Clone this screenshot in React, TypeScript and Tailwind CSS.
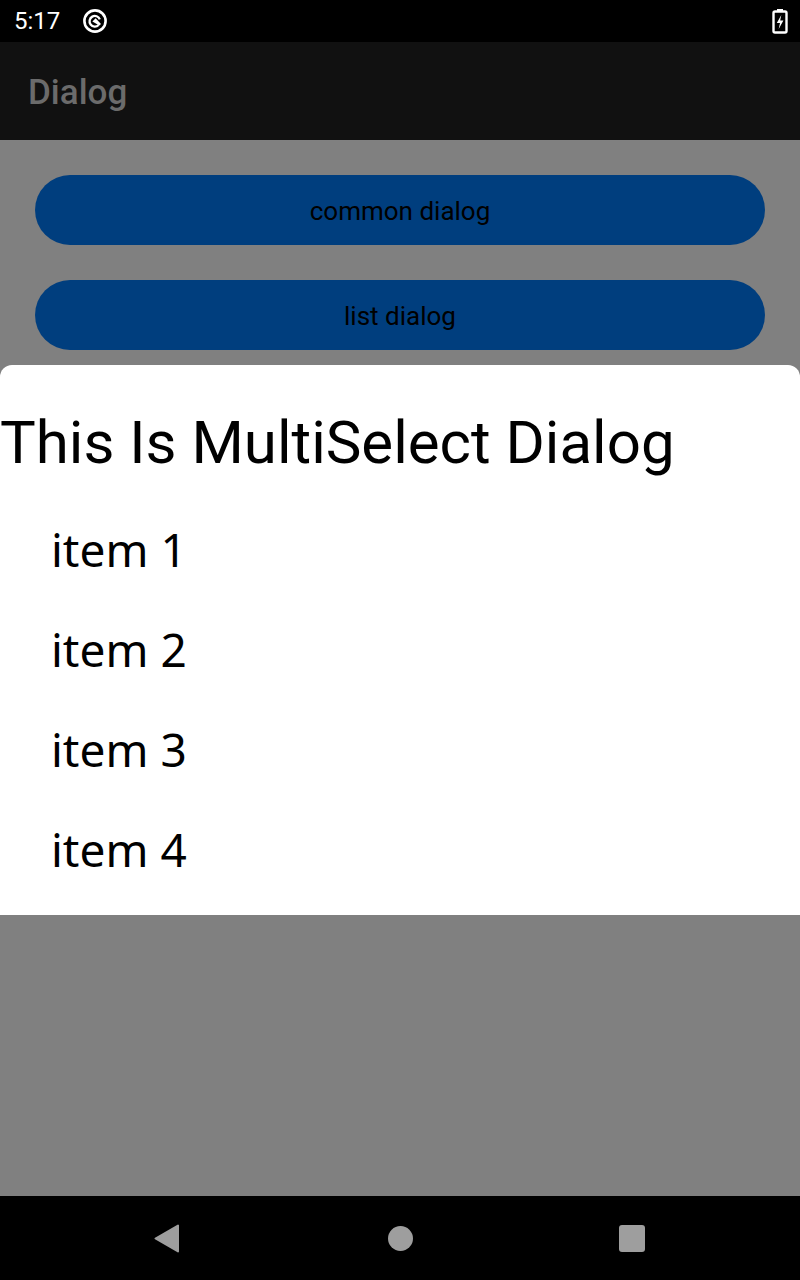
import React from "react";

const roboto = { fontFamily: "Roboto, 'Noto Sans', sans-serif" };
const noto = { fontFamily: "'Noto Sans', Roboto, sans-serif" };

function StatusIcon() {
  return (
    <svg width="26" height="26" viewBox="0 0 26 26" fill="none">
      <circle cx="13" cy="13" r="10.6" stroke="white" strokeWidth="2.6" />
      <path
        d="M16.6 17 A5.3 5.3 0 1 1 17.8 11.4"
        stroke="white"
        strokeWidth="2.3"
        fill="none"
      />
      <path d="M10.4 13.4 L13.6 10.3 L19 15.9 L17.3 17.5 Z" fill="white" />
    </svg>
  );
}

function Battery() {
  return (
    <svg width="16" height="26" viewBox="0 0 16 26" fill="none">
      <rect x="5" y="1" width="6" height="3" fill="white" />
      <rect x="1.5" y="3.5" width="13" height="21" rx="1.5" stroke="white" strokeWidth="2.4" />
      <path d="M9.3 7 L4.8 15 H8 L6.7 21 L11.4 12.6 H8.2 Z" fill="white" />
    </svg>
  );
}

export default function App() {
  return (
    <div className="relative w-[800px] h-[1280px] overflow-hidden flex flex-col bg-[#808080]">
      {/* Status bar */}
      <div className="h-[42px] bg-black flex items-center px-[14px] shrink-0">
        <span className="text-white text-[24px] leading-none" style={roboto}>
          5:17
        </span>
        <div className="ml-[22px] flex items-center">
          <StatusIcon />
        </div>
        <div className="ml-auto mr-[-2px] flex items-center">
          <Battery />
        </div>
      </div>

      {/* App bar */}
      <div className="h-[98px] bg-[#111111] flex items-center px-[28px] shrink-0">
        <span className="text-[#6b6b6b] text-[35px] font-medium leading-none mt-[2px]" style={roboto}>
          Dialog
        </span>
      </div>

      {/* Content */}
      <div className="flex-1 flex flex-col gap-[35px] px-[35px] pt-[35px]">
        <div
          className="h-[70px] rounded-full bg-[#003e7e] flex items-center justify-center text-black text-[26px] pt-[3px]"
          style={roboto}
        >
          common dialog
        </div>
        <div
          className="h-[70px] rounded-full bg-[#003e7e] flex items-center justify-center text-black text-[26px] pt-[3px]"
          style={roboto}
        >
          list dialog
        </div>
      </div>

      {/* Nav bar */}
      <div className="h-[84px] bg-black flex items-center shrink-0">
        <div className="w-[800px] relative h-full flex items-center">
          <div className="absolute left-[154px] top-[28px]">
            <svg width="26" height="29" viewBox="0 0 26 29">
              <path d="M24 1.5 L24 27.5 L1.5 14.5 Z" fill="#9e9e9e" stroke="#9e9e9e" strokeWidth="2" strokeLinejoin="round" />
            </svg>
          </div>
          <div className="absolute left-[388px] top-[30px] w-[25px] h-[25px] rounded-full bg-[#9e9e9e]" />
          <div className="absolute left-[619px] top-[29px] w-[26px] h-[27px] rounded-[3px] bg-[#9e9e9e]" />
        </div>
      </div>

      {/* Dialog */}
      <div className="absolute left-0 top-[365px] w-[800px] h-[550px] bg-white rounded-t-[12px] flex flex-col">
        <div
          className="pt-[43px] text-[60px] leading-[70px] text-black whitespace-nowrap"
          style={roboto}
        >
          This Is MultiSelect Dialog
        </div>
        <div className="mt-[21px] flex flex-col">
          {["item 1", "item 2", "item 3", "item 4"].map((t) => (
            <div
              key={t}
              className="h-[100px] leading-[100px] pl-[51px] text-[46px] text-black"
              style={noto}
            >
              {t}
            </div>
          ))}
        </div>
      </div>
    </div>
  );
}
